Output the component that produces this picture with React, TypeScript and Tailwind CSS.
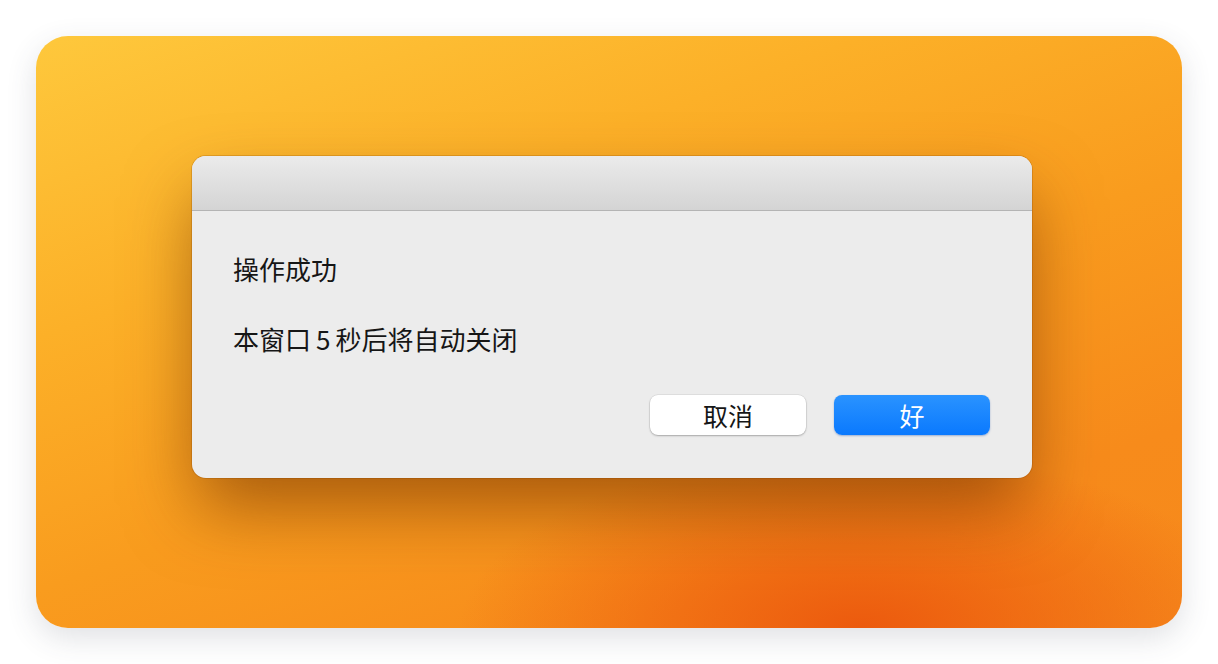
const cjk = "font-['PingFang_SC','Noto_Sans_CJK_SC',sans-serif]";

function AlertDialog() {
  return (
    <div className="w-[840px] h-[322px] rounded-[14px] overflow-hidden bg-[#ececec] shadow-[0_34px_70px_-6px_rgba(110,45,0,0.6),0_0_0_1px_rgba(150,80,0,0.25)] flex flex-col">
      <div className="h-[55px] bg-[linear-gradient(180deg,#ebebeb_0%,#d4d4d4_100%)] border-b border-[#b4b4b4]" />
      <div className={`flex-1 flex flex-col pl-[41px] pr-[42px] pt-[40px] text-[#161616] ${cjk}`}>
        <p className="text-[26px] leading-[36px]">操作成功</p>
        <p className="mt-[34px] text-[26px] leading-[36px]">
          本窗口<span className="mx-[5px]">5</span>秒后将自动关闭
        </p>
        <div className="mt-[38px] flex justify-end gap-[28px]">
          <button className="w-[156px] h-[40px] rounded-[8px] bg-white text-[25px] leading-none text-[#161616] shadow-[0_1px_2px_rgba(0,0,0,0.25),0_0_0_0.5px_rgba(0,0,0,0.1)]">
            取消
          </button>
          <button className="w-[156px] h-[40px] rounded-[8px] bg-[linear-gradient(180deg,#2a93ff_0%,#0a79fe_100%)] text-[25px] leading-none text-white shadow-[0_1px_2px_rgba(0,60,160,0.35)]">
            好
          </button>
        </div>
      </div>
    </div>
  );
}

export default function App() {
  return (
    <div className="w-[1218px] h-[664px] bg-white p-[36px]">
      <div className="w-full h-full rounded-[32px] overflow-hidden shadow-[0_10px_30px_rgba(60,70,90,0.16)] bg-[radial-gradient(ellipse_35%_30%_at_72%_100%,#ec5a0e_0%,rgba(240,100,20,0)_100%),linear-gradient(160deg,#fec83c_0%,#fcb028_30%,#f99c1e_55%,#f78b1b_80%,#f6891c_100%)] pt-[120px] pl-[156px]">
        <AlertDialog />
      </div>
    </div>
  );
}
